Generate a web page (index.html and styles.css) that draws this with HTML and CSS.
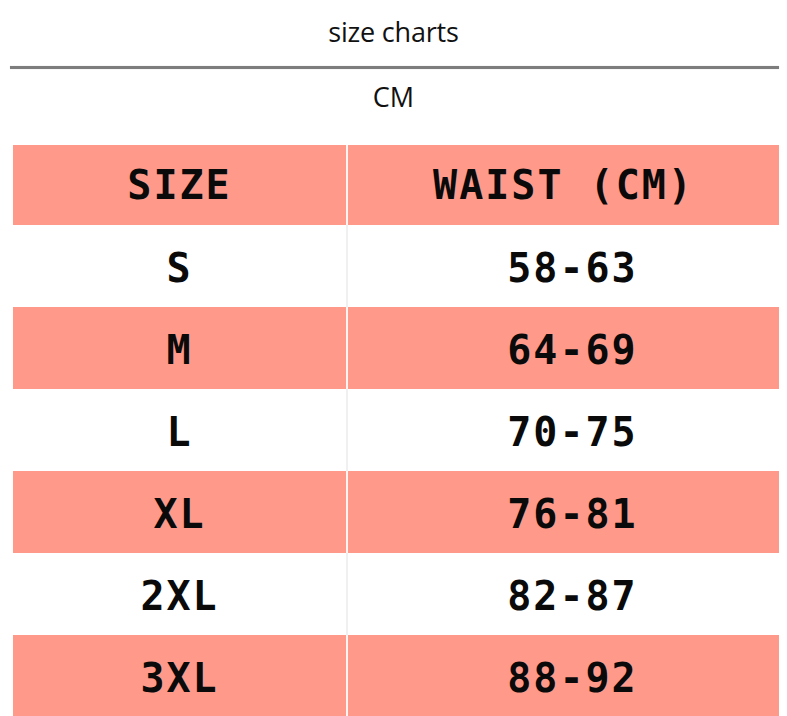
FILE: index.html
```html
<!DOCTYPE html>
<html>
<head>
<meta charset="utf-8">
<link rel="stylesheet" href="styles.css">
</head>
<body>
<div class="page">
  <div class="title">size charts</div>
  <div class="rule"></div>
  <div class="unit">CM</div>
  <table class="chart">
    <colgroup><col class="c1"><col class="c2"></colgroup>
    <thead>
      <tr class="pink head"><th>SIZE</th><th>WAIST (CM)</th></tr>
    </thead>
    <tbody>
      <tr class="white"><td>S</td><td class="num">58-63</td></tr>
      <tr class="pink"><td>M</td><td class="num">64-69</td></tr>
      <tr class="white"><td>L</td><td class="num">70-75</td></tr>
      <tr class="pink"><td>XL</td><td class="num">76-81</td></tr>
      <tr class="white"><td>2XL</td><td class="num">82-87</td></tr>
      <tr class="pink"><td>3XL</td><td class="num">88-92</td></tr>
    </tbody>
  </table>
</div>
</body>
</html>
```
FILE: styles.css
```css
html, body {
  margin: 0;
  padding: 0;
  background: #ffffff;
}
.page {
  width: 787px;
  height: 716px;
  overflow: hidden;
}
.title {
  height: 66px;
  line-height: 64px;
  text-align: center;
  font-family: "Open Sans", "Liberation Sans", sans-serif;
  font-size: 27px;
  color: #111;
  letter-spacing: -0.2px;
}
.rule {
  height: 3px;
  margin: 0 8px 0 10px;
  background: #7d7d7d;
  box-shadow: 0 0 1px #bbb;
}
.unit {
  height: 56px;
  line-height: 56px;
  padding-bottom: 20px;
  text-align: center;
  font-family: "Open Sans", "Liberation Sans", sans-serif;
  font-size: 27px;
  color: #111;
}
.chart {
  margin-left: 13px;
  width: 766px;
  border-collapse: collapse;
  table-layout: fixed;
  font-family: "DejaVu Sans Mono", "Liberation Mono", monospace;
  font-weight: bold;
  font-size: 40px;
  letter-spacing: 2px;
  color: #0a0a0a;
}
.c1 { width: 334px; }
.c2 { width: 432px; }
.chart th, .chart td {
  padding: 4px 0 0 0;
  text-align: center;
  height: 78px;
  font-weight: bold;
}
.chart .head th {
  height: 80px;
  padding: 0;
}
.chart th + th, .chart td + td {
  border-left: 2px solid #fff4f2;
}
.white td + td {
  border-left-color: #f0f0f0;
}
.chart td.num {
  padding-left: 18px;
}
.pink {
  background: #ff9a8b;
}
.white {
  background: #ffffff;
}
```
